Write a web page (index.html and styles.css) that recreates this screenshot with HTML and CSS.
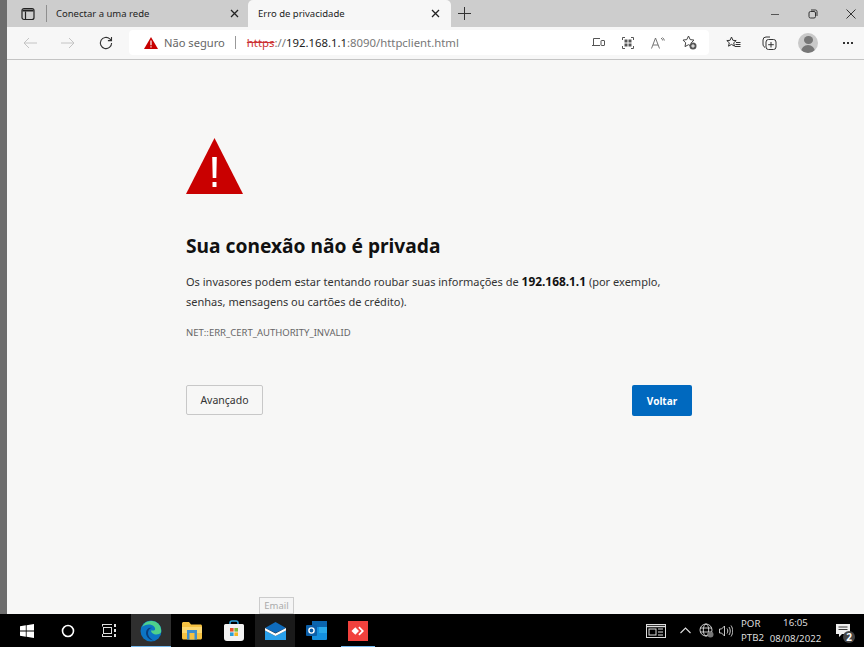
FILE: index.html
```html
<!DOCTYPE html>
<html lang="pt-BR">
<head>
    <meta charset="UTF-8">
    <meta name="viewport" content="width=device-width, initial-scale=1.0">
    <title>Erro de privacidade</title>
    <link rel="stylesheet" href="styles.css">
</head>
<body>
    <div class="desktop">
        <div class="side-strip"></div>
        <div class="browser">
            <!-- abas -->
            <div class="tabstrip">
                <div class="tab-actions">
                    <svg width="14" height="14" viewBox="0 0 14 14" fill="none" stroke="#222" stroke-width="1.2"><rect x="1" y="1.5" width="12" height="11" rx="2"/><path d="M1.5 2.5h11v2h-11z" fill="#222" stroke="none"/><path d="M4.5 4.5v8"/></svg>
                </div>
                <div class="tab-sep"></div>
                <div class="tab">
                    <span class="tab-title">Conectar a uma rede</span>
                    <svg class="tab-close" width="9" height="9" viewBox="0 0 9 9" stroke="#222" stroke-width="1.3"><path d="M1 1l7 7M8 1l-7 7"/></svg>
                </div>
                <div class="tab tab-active">
                    <span class="tab-title">Erro de privacidade</span>
                    <svg class="tab-close" width="9" height="9" viewBox="0 0 9 9" stroke="#222" stroke-width="1.3"><path d="M1 1l7 7M8 1l-7 7"/></svg>
                </div>
                <svg class="new-tab" width="13" height="13" viewBox="0 0 13 13" stroke="#333" stroke-width="1"><path d="M6.5 0v13M0 6.5h13"/></svg>
                <div class="win-controls">
                    <svg width="10" height="10" viewBox="0 0 10 10" stroke="#555" stroke-width="1"><path d="M1 5.5h8"/></svg>
                    <svg width="10" height="10" viewBox="0 0 10 10" fill="none" stroke="#333" stroke-width="1"><rect x="1" y="2.5" width="6.5" height="6.5" rx="1.5"/><path d="M3 1h4.5A1.5 1.5 0 0 1 9 2.5V7"/></svg>
                    <svg width="10" height="10" viewBox="0 0 10 10" stroke="#333" stroke-width="1"><path d="M.5.5l9 9M9.5.5l-9 9"/></svg>
                </div>
            </div>
            <!-- barra de endereco -->
            <div class="toolbar">
                <div class="nav-buttons">
                    <svg width="14" height="12" viewBox="0 0 14 12" fill="none" stroke="#c4c4c4" stroke-width="1"><path d="M14 6H1M6 1L1 6l5 5"/></svg>
                    <svg width="14" height="12" viewBox="0 0 14 12" fill="none" stroke="#c4c4c4" stroke-width="1"><path d="M0 6h13M8 1l5 5-5 5"/></svg>
                    <svg width="14" height="14" viewBox="0 0 14 14" fill="none" stroke="#333" stroke-width="1.1"><path d="M12.6 7A5.6 5.6 0 1 1 10.8 2.9L12.5 4.6M12.5 1v3.6H8.9"/></svg>
                </div>
                <div class="address">
                    <svg class="warn-small" width="14" height="12" viewBox="0 0 14 12"><path d="M7 0L14 12H0z" fill="#c70000"/><path d="M6.4 3.5h1.2v4.7H6.4zM6.4 9.2h1.2v1.2H6.4z" fill="#fff"/></svg>
                    <span class="not-secure">Não seguro</span>
                    <span class="addr-sep"></span>
                    <span class="url"><span class="url-scheme">https</span><span class="url-dim">://</span>192.168.1.1<span class="url-dim">:8090/httpclient.html</span></span>
                    <div class="addr-icons">
                        <svg width="13" height="11" viewBox="0 0 13 11" fill="none" stroke="#555"><path d="M8 1.500H1.500V8M0 8.500h8"/><rect x="9" y="3.500" width="3.500" height="5" rx=".5"/></svg>
                        <svg width="12" height="12" viewBox="0 0 12 12" fill="none" stroke="#555"><path d="M.5 3V.5H3M9 .5h2.500V3M11.500 9v2.500H9M3 11.500H.5V9"/><path d="M2.500 2.500h3v3h-3zM6.500 2.500h3v3h-3zM2.500 6.500h3v3h-3zM6.500 6.500h3v3h-3z" fill="#555" stroke="none"/></svg>
                        <svg width="14" height="12" viewBox="0 0 14 12" fill="none" stroke="#666" stroke-width=".9"><path d="M.5 11.500L4.500 1l4 10.500M2 8h5M10 1c1 .7 1.500 1.500 1.700 2.500M11.500.5c1 .8 1.700 2 1.900 3"/></svg>
                        <svg width="15" height="15" viewBox="0 0 15 15" fill="none"><path d="M6.500 1l1.700 3.600 3.800.5-2.800 2.700.7 3.800-3.400-1.900L3 11.600l.7-3.800L1 5.100l3.800-.5z" stroke="#444"/><circle cx="11" cy="11" r="3.500" fill="#555"/><path d="M11 9.200v3.600M9.200 11h3.600" stroke="#fff"/></svg>
                    </div>
                </div>
                <div class="tool-icons">
                    <svg width="15" height="14" viewBox="0 0 15 14" fill="none" stroke="#333"><path d="M5.500 1l1.400 3.300 3.300.3-2.500 2.200.8 3.400L5.500 8.400 2.500 10.200l.8-3.400L.8 4.600l3.300-.3z"/><path d="M10 6.500h4.500M9.500 8.500h5M9 10.500h5.500"/></svg>
                    <svg width="15" height="15" viewBox="0 0 15 15" fill="none" stroke="#333"><path d="M3 11.500C1.500 10.500 1 9.500 1 8V4a3 3 0 0 1 3-3h4"/><rect x="4" y="3.500" width="10" height="10" rx="2.500"/><path d="M9 6v5.500M6.200 8.700h5.600"/></svg>
                    <span class="avatar"><span class="avatar-head"></span><span class="avatar-body"></span></span>
                    <span class="more"><i></i><i></i><i></i></span>
                </div>
            </div>
            <!-- pagina de erro -->
            <main class="page">
                <svg class="warn-big" width="57" height="56" viewBox="0 0 57 56"><path d="M28.500 0L57 56H0z" fill="#c90000"/><path d="M26.200 19h4.600l-.5 21h-3.600zM26.500 44h4v5h-4z" fill="#fff"/></svg>
                <h1 class="err-title">Sua conexão não é privada</h1>
                <p class="err-text">Os invasores podem estar tentando roubar suas informações de <strong>192.168.1.1</strong> (por exemplo, senhas, mensagens ou cartões de crédito).</p>
                <p class="err-code">NET::ERR_CERT_AUTHORITY_INVALID</p>
                <div class="err-buttons">
                    <button class="btn btn-plain">Avançado</button>
                    <button class="btn btn-primary">Voltar</button>
                </div>
                <div class="tooltip">Email</div>
            </main>
        </div>
    </div>
    <!-- barra de tarefas -->
    <footer class="taskbar">
        <div class="task-left">
            <span class="task-btn task-start">
                <svg width="14" height="14" viewBox="0 0 14 14" fill="#fff"><path d="M0 2.200L5.800 1.300V6.600H0zM6.600 1.200L14 0V6.600H6.600zM0 7.400H5.800V12.700L0 11.800zM6.600 7.400H14V14L6.600 12.800z"/></svg>
            </span>
            <span class="task-btn task-search">
                <svg width="14" height="14" viewBox="0 0 14 14" fill="none" stroke="#fff" stroke-width="1.6"><circle cx="7" cy="7" r="5.500"/></svg>
            </span>
            <span class="task-btn task-view">
                <svg width="15" height="13" viewBox="0 0 15 13" fill="none" stroke="#ddd"><path d="M.5 0v2.500M0 .5h10M.5 10v3M0 12.500h10"/><rect x="1.500" y="3.500" width="8" height="6"/><path d="M13 0v3M13 5v3M13 10v3" stroke-width="2"/></svg>
            </span>
            <span class="task-btn task-edge task-open">
                <svg width="22" height="22" viewBox="0 0 22 22"><circle cx="11" cy="11" r="10.500" fill="#0c75c4"/><path d="M21 9A10 10 0 0 0 2 7c3-3 9-3.500 12-.5 1.500 1.500 1.500 3.500 0 4h-3c0 2 2.500 4 5.500 4 2 0 3.500-.8 4.500-2A11 11 0 0 0 21 9z" fill="#4fd18b"/><path d="M8 13c0-3 2-5 4-5-3-1-6 1-6 5 0 4 4 7.500 8 7.500-3-1-6-4-6-7.500z" fill="#0a3d7a"/></svg>
            </span>
            <span class="task-btn">
                <svg width="20" height="18" viewBox="0 0 20 18"><path d="M0 1.500C0 .7.700 0 1.500 0H7l2 2.500h9.500c.8 0 1.500.7 1.500 1.500v12c0 .8-.7 1.500-1.500 1.500h-17C.7 17.500 0 16.800 0 16z" fill="#f5c142"/><rect x="0" y="5" width="20" height="6" fill="#fbd872"/><rect x="5" y="8" width="10" height="9.500" fill="#3f8fce"/><rect x="7.500" y="11" width="5" height="6.500" fill="#f5c142"/></svg>
            </span>
            <span class="task-btn">
                <svg width="20" height="21" viewBox="0 0 20 21"><path d="M6 4V3a2 2 0 0 1 2-2h4a2 2 0 0 1 2 2v1" fill="none" stroke="#2b9fd8" stroke-width="1.5"/><path d="M0 5.500A1.500 1.500 0 0 1 1.500 4h17A1.500 1.500 0 0 1 20 5.500V18a3 3 0 0 1-3 3H3a3 3 0 0 1-3-3z" fill="#f2f2f2"/><rect x="6" y="8" width="3.600" height="3.600" fill="#e8512a"/><rect x="10.400" y="8" width="3.600" height="3.600" fill="#7db83a"/><rect x="6" y="12.400" width="3.600" height="3.600" fill="#2b9fd8"/><rect x="10.400" y="12.400" width="3.600" height="3.600" fill="#f5b822"/></svg>
            </span>
            <span class="task-btn task-mail">
                <svg width="21" height="18" viewBox="0 0 21 18"><path d="M10.500 0L21 6 10.500 11 0 6z" fill="#0f6cbd"/><path d="M0 8.500V18H21V8.500L10.500 14z" fill="#2aa0ea"/><path d="M0 6l10.500 5.500L21 6v2.500L10.500 14 0 8.500z" fill="#fff"/></svg>
            </span>
            <span class="task-btn">
                <svg width="21" height="19" viewBox="0 0 21 19"><rect x="6" y="0" width="15" height="19" rx="1" fill="#1490df"/><rect x="6" y="0" width="15" height="6" fill="#0a64ad"/><rect x="13" y="6" width="8" height="6" fill="#28a8ea"/><rect x="0" y="4" width="11" height="11" rx="1" fill="#0a5ea8"/><circle cx="5.500" cy="9.500" r="2.600" fill="none" stroke="#fff" stroke-width="1.4"/></svg>
            </span>
            <span class="task-btn task-open task-anydesk">
                <svg width="20" height="20" viewBox="0 0 20 20"><rect width="20" height="20" fill="#f1413d"/><path d="M3.500 10l3.800-3.800L11 10l-3.700 3.800z" fill="#fff"/><path d="M11.500 5.500l4.500 4.500-4.500 4.500-1.200-1.200 3.300-3.300-3.300-3.300z" fill="#fff"/></svg>
            </span>
        </div>
        <div class="tray">
            <svg class="tray-news" width="20" height="14" viewBox="0 0 20 14" fill="none" stroke="#ddd"><rect x=".5" y=".5" width="19" height="13"/><path d="M.5 2.500h19" stroke-width="1.5"/><rect x="3" y="5" width="7" height="6"/><path d="M12 5h5M12 8h5M12 11h5"/></svg>
            <svg class="tray-chevron" width="11" height="7" viewBox="0 0 11 7" fill="none" stroke="#ddd" stroke-width="1.1"><path d="M.5 6l5-5 5 5"/></svg>
            <svg class="tray-globe" width="15" height="15" viewBox="0 0 15 15" fill="none" stroke="#ddd" stroke-width=".9"><circle cx="7" cy="7" r="6"/><ellipse cx="7" cy="7" rx="2.700" ry="6"/><path d="M1 5h12M1 9h12"/><circle cx="11.500" cy="11.500" r="3" fill="#777" stroke="none"/></svg>
            <svg class="tray-sound" width="14" height="12" viewBox="0 0 14 12" fill="none" stroke="#ddd" stroke-width=".9"><path d="M.5 4H2.500L5.500 1V11L2.500 8H.5z"/><path d="M8 3.500c1 1.500 1 3.500 0 5M10 2c1.700 2.500 1.700 5.500 0 8M12 .5c2.300 3.300 2.300 7.700 0 11"/></svg>
            <div class="tray-lang"><span>POR</span><span>PTB2</span></div>
            <div class="tray-clock"><span>16:05</span><span>08/08/2022</span></div>
            <span class="tray-notify">
                <svg width="14" height="13" viewBox="0 0 14 13" fill="#eee"><path d="M0 0h14v10H6l-3 3v-3H0z"/><path d="M2.500 3h9M2.500 5.500h9" stroke="#222" stroke-width=".9"/></svg>
                <span class="notify-badge">2</span>
            </span>
        </div>
    </footer>
</body>
</html>
```

FILE: styles.css
```css
* {
    box-sizing: border-box;
}
html, body {
    margin: 0;
    height: 100%;
    overflow: hidden;
}
body {
    font-family: "Noto Sans", "Open Sans", sans-serif;
    display: flex;
    flex-direction: column;
    width: 864px;
    height: 647px;
    background: #000;
}
svg {
    display: block;
    flex-shrink: 0;
}

.desktop {
    display: flex;
    height: 614px;
}
.side-strip {
    width: 7px;
    background: #6d6d6d;
}
.browser {
    flex: 1;
    display: flex;
    flex-direction: column;
    min-width: 0;
}

/* abas */
.tabstrip {
    height: 27px;
    background: #cdcdcd;
    display: flex;
    align-items: center;
    color: #222;
    font-size: 9.5px;
}
.tab-actions {
    width: 39px;
    padding-left: 14px;
}
.tab-sep {
    width: 1px;
    height: 17px;
    background: #8f8f8f;
}
.tab {
    width: 201px;
    height: 27px;
    padding: 0 9px 0 9px;
    display: flex;
    align-items: center;
    justify-content: space-between;
}
.tab-active {
    width: 203px;
    background: #f7f7f7;
    border-radius: 5px 5px 0 0;
    padding: 0 11px 0 10px;
}
.new-tab {
    margin-left: 7px;
}
.win-controls {
    margin-left: auto;
    display: flex;
    gap: 28px;
    padding-right: 8px;
}

/* barra de endereco */
.toolbar {
    height: 33px;
    background: #f7f7f7;
    border-bottom: 1px solid #c4c4c4;
    display: flex;
    align-items: center;
}
.nav-buttons {
    width: 122px;
    flex-shrink: 0;
    padding-left: 16px;
    display: flex;
    align-items: center;
    gap: 24px;
}
.address {
    width: 580px;
    flex-shrink: 0;
    height: 25px;
    background: #fff;
    border-radius: 4px;
    display: flex;
    align-items: center;
    padding-left: 15px;
    font-size: 11.15px;
    margin-top: -1px;
}
.warn-small {
    margin-right: 6px;
}
.not-secure {
    color: #666;
}
.addr-sep {
    width: 1px;
    height: 13px;
    background: #999;
    margin: 0 11px 0 10px;
}
.url {
    color: #222;
    font-size: 11.35px;
}
.url-scheme {
    color: #c33;
    text-decoration: line-through;
}
.url-dim {
    color: #777;
}
.addr-icons {
    margin-left: auto;
    display: flex;
    align-items: center;
    gap: 17px;
    padding-right: 12px;
}
.tool-icons {
    display: flex;
    align-items: center;
    gap: 21px;
    padding-left: 17px;
}
.avatar {
    width: 20px;
    height: 20px;
    border-radius: 50%;
    background: #c9c9c9;
    display: flex;
    flex-direction: column;
    align-items: center;
    overflow: hidden;
}
.avatar-head {
    width: 9px;
    height: 9px;
    border-radius: 50%;
    background: #777;
    margin-top: 3px;
}
.avatar-body {
    width: 14px;
    height: 8px;
    border-radius: 7px 7px 0 0;
    background: #777;
    margin-top: 1px;
}
.more {
    display: flex;
    gap: 2px;
    margin-left: 4px;
}
.more i {
    width: 2px;
    height: 2px;
    background: #333;
}

/* pagina de erro */
.page {
    flex: 1;
    position: relative;
    background: #f7f7f6;
    padding: 78px 172px 0 179px;
    color: #1a1a1a;
}
.warn-big {
    margin-bottom: 39px;
}
.err-title {
    font-size: 19.2px;
    line-height: 26px;
    font-weight: 700;
    margin: 0 0 13px;
    color: #111;
}
.err-text {
    font-size: 11.02px;
    line-height: 20px;
    margin: 0 0 12px;
    color: #333;
}
.err-text strong {
    font-size: 11.9px;
    line-height: 1;
    color: #111;
}
.err-code {
    font-size: 9.5px;
    line-height: 18px;
    margin: 0 0 43px;
    color: #666;
}
.err-buttons {
    display: flex;
    justify-content: space-between;
    align-items: flex-start;
}
.btn {
    font-family: inherit;
    font-size: 10.5px;
    border-radius: 2px;
    cursor: pointer;
}
.btn-plain {
    width: 77px;
    height: 30px;
    background: #f7f7f6;
    color: #333;
    border: 1px solid #c8c8c8;
}
.btn-primary {
    width: 60px;
    height: 31px;
    background: #0069bf;
    color: #fff;
    border: none;
    font-size: 10px;
    font-weight: 700;
}
.tooltip {
    position: absolute;
    left: 252px;
    bottom: 0;
    height: 17px;
    width: 35px;
    background: #f5f5f5;
    border: 1px solid #ccc;
    color: #aaa;
    font-size: 9.5px;
    text-align: center;
    line-height: 15px;
}

/* barra de tarefas */
.taskbar {
    height: 33px;
    background: #000;
    display: flex;
    justify-content: space-between;
    color: #ddd;
    padding-left: 7px;
}
.task-left {
    display: flex;
}
.task-btn {
    position: relative;
    width: 42px;
    height: 33px;
    display: flex;
    align-items: center;
    justify-content: center;
}
.task-start {
    width: 40px;
}
.task-search {
    width: 41px;
}
.task-view {
    width: 43px;
}
.task-edge {
    width: 40px;
    background: #2f2f2f;
}
.task-mail {
    width: 40px;
    background: #1a1a1a;
}
.task-open::after {
    content: "";
    position: absolute;
    left: 0;
    right: 0;
    bottom: 0;
    height: 1px;
    background: #76b9ed;
}
.task-anydesk::after {
    left: 4px;
    right: 4px;
}
.tray {
    display: flex;
    align-items: center;
    font-size: 9.7px;
}
.tray-news {
    margin-right: 14px;
}
.tray-chevron {
    margin-right: 8px;
}
.tray-globe {
    margin-right: 5px;
}
.tray-sound {
    margin-right: 8px;
}
.tray-lang {
    display: flex;
    flex-direction: column;
    line-height: 14px;
    width: 28px;
    margin-top: 1px;
}
.tray-clock {
    display: flex;
    flex-direction: column;
    align-items: center;
    line-height: 16px;
    width: 53px;
}
.tray-notify {
    position: relative;
    width: 42px;
    height: 33px;
    display: flex;
    align-items: center;
    justify-content: center;
}
.notify-badge {
    position: absolute;
    right: 9px;
    bottom: 4px;
    width: 12px;
    height: 12px;
    border-radius: 50%;
    background: #444;
    color: #fff;
    font-size: 10px;
    font-weight: 700;
    line-height: 12px;
    text-align: center;
}
```
